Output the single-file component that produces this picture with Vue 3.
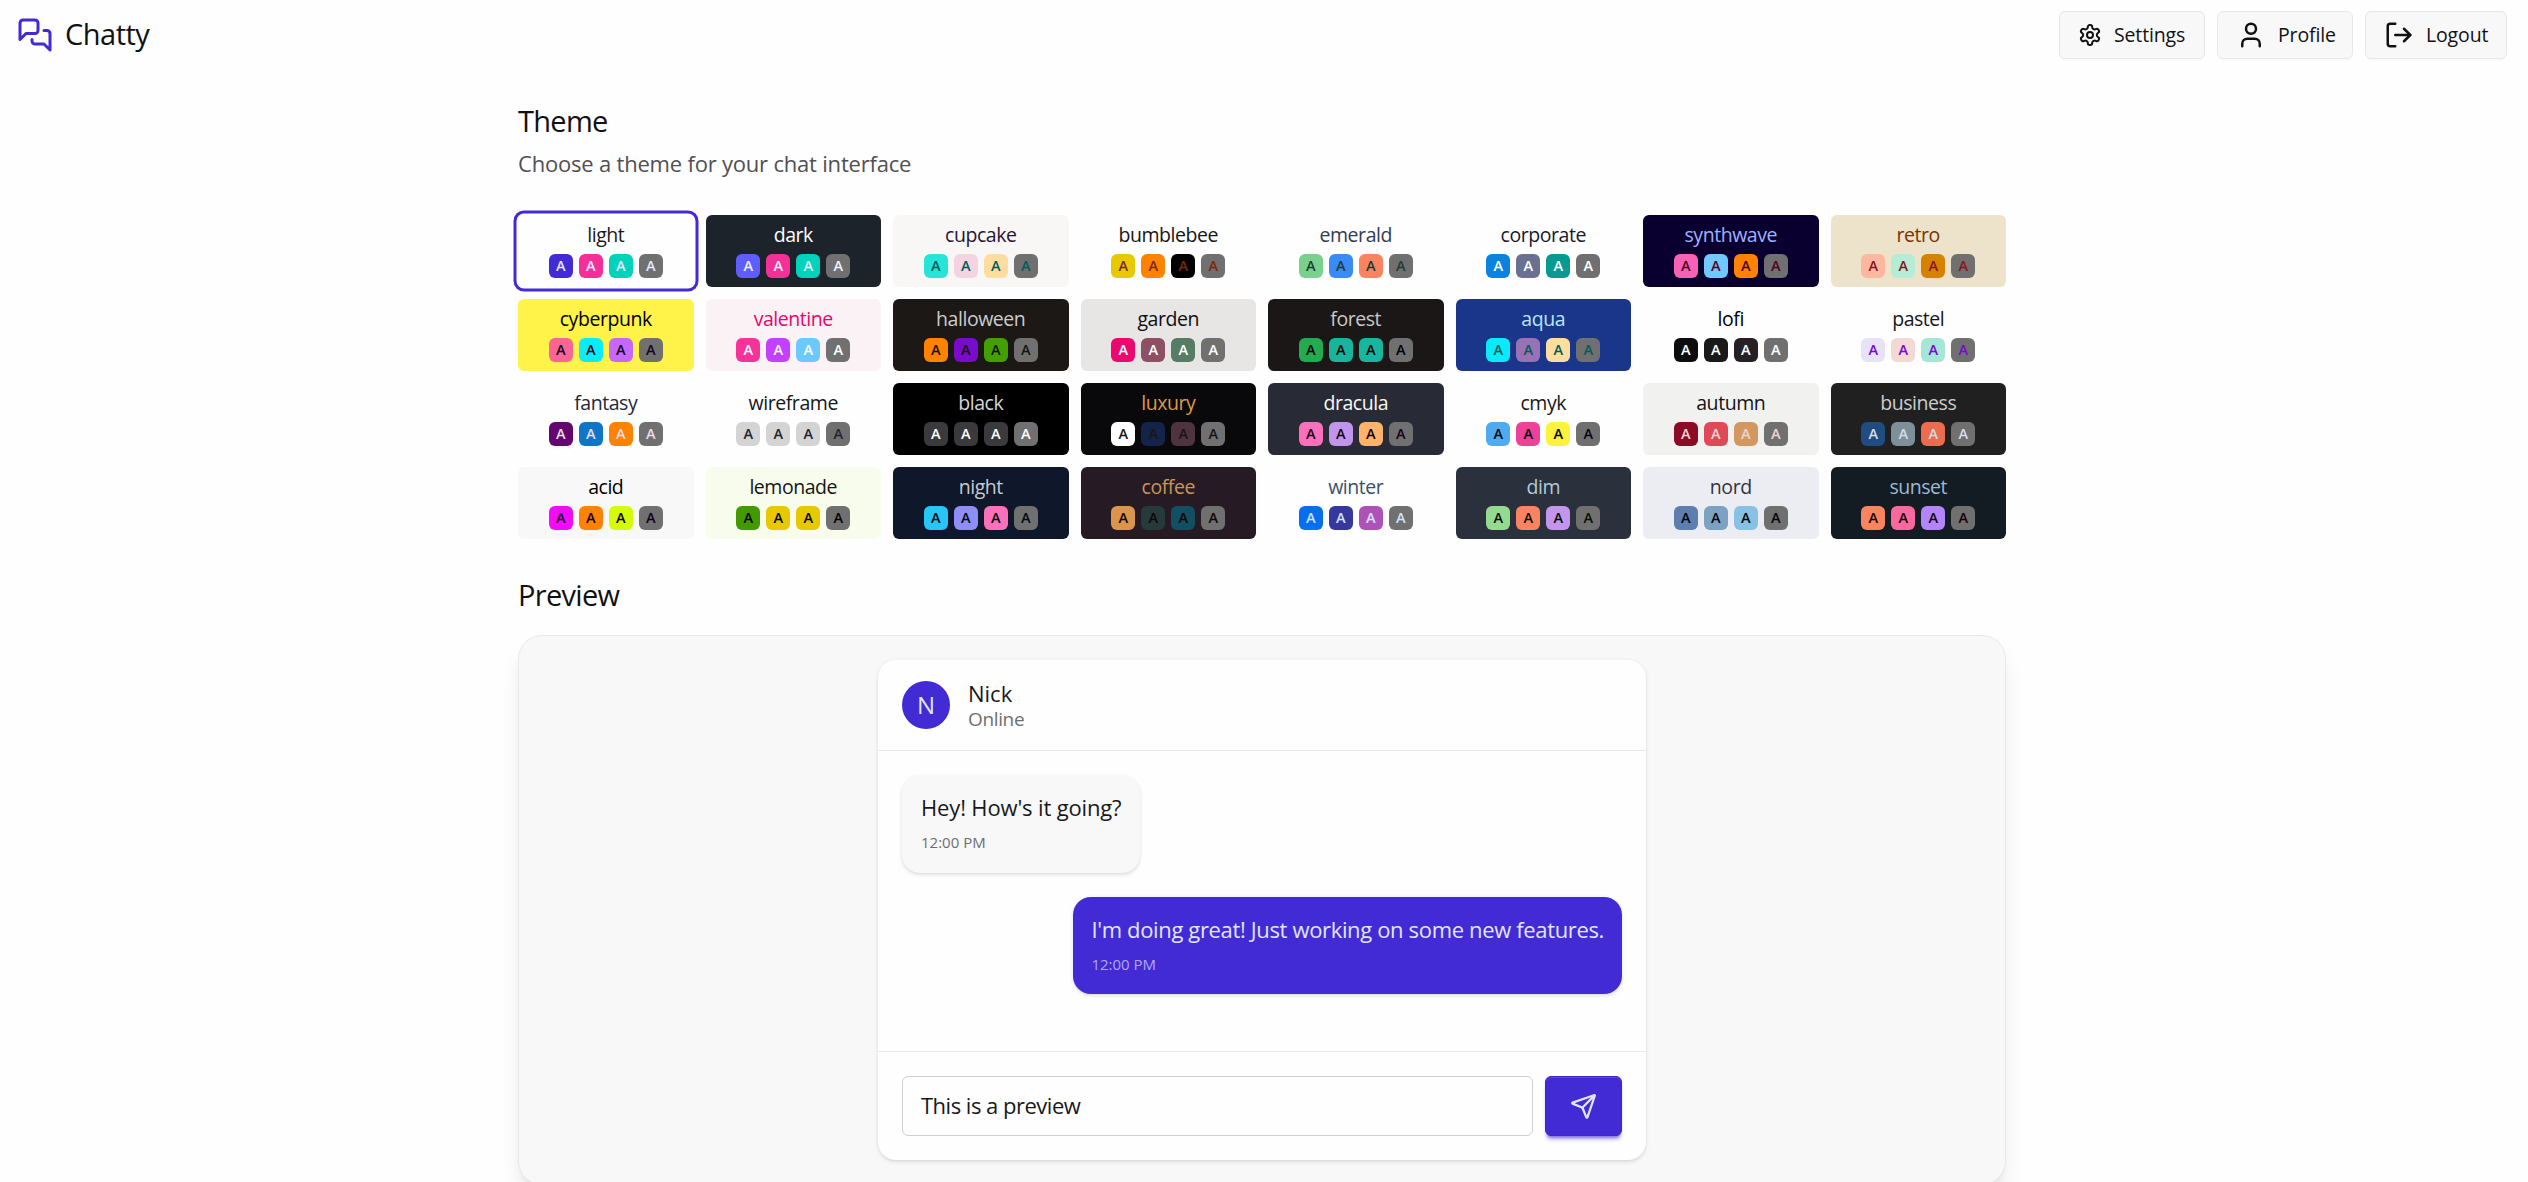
<script setup>
const raw = [
  ['light', '#fefefe', '#18181b', '#422ad5 #f43098 #00d3bb', '#e0e7ff'],
  ['dark', '#1d232a', '#ffffff', '#605dff #f43098 #00d3bb', '#edf1fe'],
  ['cupcake', '#f9f7f5', '#291334', '#25e5d8 #f3d4e0 #ffdca0', '#005d58'],
  ['bumblebee', '#fefefe', '#161616', '#e8c800 #ff8200 #000000', '#7a2a0a'],
  ['emerald', '#fefefe', '#333c4d', '#7ad18e #3a8af7 #fa8460', '#223d30'],
  ['corporate', '#fefefe', '#181a2a', '#0b82dd #6a7090 #079a92', '#ffffff'],
  ['synthwave', '#09002f', '#a1b1ff', '#f861b4 #71c8ff #ff8200', '#500323'],
  ['retro', '#ece3ca', '#793205', '#ffb8a0 #b4ecd6 #d68200', '#8b1320'],
  ['cyberpunk', '#fff248', '#000000', '#fa6496 #0aecf7 #c668ff', '#190711'],
  ['valentine', '#fbf2f6', '#e8056c', '#f63398 #c340ff #6bc9ff', '#ffffff'],
  ['halloween', '#1b1816', '#cdcdcd', '#ff8200 #7a0bcb #43a000', '#151611'],
  ['garden', '#e8e6e5', '#100f0f', '#ed0870 #8c4f64 #577c65', '#ffffff'],
  ['forest', '#1b1716', '#cac9c9', '#22ab50 #18b59c #18b59f', '#000000'],
  ['aqua', '#1a368b', '#b8e6fe', '#0aeaf7 #9b71b5 #ffdca0', '#005d58'],
  ['lofi', '#fefefe', '#000000', '#0d0d0d #1a1919 #262026', '#ffffff'],
  ['pastel', '#fefefe', '#161616', '#e8e2f9 #f3d8d3 #a5e6d8', '#7a09cc'],
  ['fantasy', '#fefefe', '#1f2937', '#63066d #0e75c7 #ff8200', '#e8dce9'],
  ['wireframe', '#fefefe', '#161616', '#d4d4d4 #d4d4d4 #d4d4d4', '#24242e'],
  ['black', '#000000', '#d6d6d6', '#3a3a3c #3a3a3c #3a3a3c', '#ffffff'],
  ['luxury', '#09090b', '#dc9a45', '#ffffff #14234a #4f3440', '#171618'],
  ['dracula', '#282a36', '#f8f8f2', '#fb70bb #c295ec #fdb36b', '#16040e'],
  ['cmyk', '#fefefe', '#161616', '#4faaf0 #ee4198 #fff23b', '#02080f'],
  ['autumn', '#f1f1f0', '#141414', '#8c0c25 #df4857 #d39860', '#efd3d4'],
  ['business', '#202020', '#cdcdcd', '#1f4d7f #7d909a #ec6c4f', '#d3dbe8'],
  ['acid', '#f8f8f8', '#000000', '#f50bfc #ff8200 #d4fb07', '#160016'],
  ['lemonade', '#f8fced', '#151614', '#439a00 #e8c800 #e8c800', '#010800'],
  ['night', '#0f172a', '#c9cbd0', '#28c5f7 #8e8ef5 #fb70bb', '#010d15'],
  ['coffee', '#261b25', '#c9955a', '#db954c #263a3b #134f63', '#110802'],
  ['winter', '#fefefe', '#3a5067', '#066eef #36399b #ae52b8', '#cde3ff'],
  ['dim', '#2a303c', '#b2ccd6', '#94da90 #fb8460 #c495ec', '#081108'],
  ['nord', '#ecedf3', '#2e3440', '#5d7eae #7ba2c3 #87c2e6', '#03060b'],
  ['sunset', '#121c22', '#9fb9d0', '#fb8460 #fb68a0 #b484fd', '#150603'],
]
const themes = raw.map(([name, bg, fg, sw, ink]) => ({
  name, bg, fg, ink, swatches: [...sw.split(' '), '#707070'],
}))
const active = 'light'
const messages = [
  { id: 1, text: "Hey! How's it going?", time: '12:00 PM', mine: false },
  { id: 2, text: "I'm doing great! Just working on some new features.", time: '12:00 PM', mine: true },
]
</script>

<template>
  <div class="page">
    <header class="topbar">
      <div class="brand">
        <svg class="icon" width="36" height="36" viewBox="0 0 24 24">
          <path d="M14 9a2 2 0 0 1-2 2H6l-4 4V4a2 2 0 0 1 2-2h8a2 2 0 0 1 2 2z" />
          <path d="M18 9h2a2 2 0 0 1 2 2v11l-4-4h-6a2 2 0 0 1-2-2v-1" />
        </svg>
        <h1>Chatty</h1>
      </div>
      <nav>
        <button class="nav-btn settings">
          <svg class="icon" width="24" height="24" viewBox="0 0 24 24">
            <path d="M12.22 2h-.44a2 2 0 0 0-2 2v.18a2 2 0 0 1-1 1.73l-.43.25a2 2 0 0 1-2 0l-.15-.08a2 2 0 0 0-2.73.73l-.22.38a2 2 0 0 0 .73 2.73l.15.1a2 2 0 0 1 1 1.72v.51a2 2 0 0 1-1 1.74l-.15.09a2 2 0 0 0-.73 2.73l.22.38a2 2 0 0 0 2.73.73l.15-.08a2 2 0 0 1 2 0l.43.25a2 2 0 0 1 1 1.73V20a2 2 0 0 0 2 2h.44a2 2 0 0 0 2-2v-.18a2 2 0 0 1 1-1.73l.43-.25a2 2 0 0 1 2 0l.15.08a2 2 0 0 0 2.73-.73l.22-.39a2 2 0 0 0-.73-2.73l-.15-.08a2 2 0 0 1-1-1.74v-.5a2 2 0 0 1 1-1.74l.15-.09a2 2 0 0 0 .73-2.73l-.22-.38a2 2 0 0 0-2.73-.73l-.15.08a2 2 0 0 1-2 0l-.43-.25a2 2 0 0 1-1-1.73V4a2 2 0 0 0-2-2z" />
            <circle cx="12" cy="12" r="3" />
          </svg>
          <span>Settings</span>
        </button>
        <button class="nav-btn profile">
          <svg class="icon" width="30" height="30" viewBox="0 0 24 24">
            <path d="M19 21v-2a4 4 0 0 0-4-4H9a4 4 0 0 0-4 4v2" />
            <circle cx="12" cy="7" r="4" />
          </svg>
          <span>Profile</span>
        </button>
        <button class="nav-btn logout">
          <svg class="icon" width="30" height="30" viewBox="0 0 24 24">
            <path d="M9 21H5a2 2 0 0 1-2-2V5a2 2 0 0 1 2-2h4" />
            <path d="m16 17 5-5-5-5" />
            <path d="M21 12H9" />
          </svg>
          <span>Logout</span>
        </button>
      </nav>
    </header>

    <main>
      <h2 class="title">Theme</h2>
      <p class="subtitle">Choose a theme for your chat interface</p>

      <div class="grid">
        <div
          v-for="t in themes"
          :key="t.name"
          class="theme"
          :class="{ active: t.name === active }"
          :style="{ background: t.bg, color: t.fg }"
        >
          <div class="name">{{ t.name }}</div>
          <div class="swatches">
            <span v-for="(c, i) in t.swatches" :key="i" :style="{ background: c, color: t.ink }">A</span>
          </div>
        </div>
      </div>

      <h2 class="title second">Preview</h2>

      <section class="preview">
        <div class="chat">
          <div class="chat-head">
            <div class="avatar">N</div>
            <div>
              <div class="who">Nick</div>
              <div class="status">Online</div>
            </div>
          </div>
          <div class="log">
            <div v-for="m in messages" :key="m.id" class="bubble" :class="{ mine: m.mine }">
              <p>{{ m.text }}</p>
              <time>{{ m.time }}</time>
            </div>
          </div>
          <div class="composer">
            <div class="field">This is a preview</div>
            <button class="send">
              <svg class="icon" width="27" height="27" viewBox="0 0 24 24">
                <path d="M14.536 21.686a.5.5 0 0 0 .937-.024l6.5-19a.496.496 0 0 0-.635-.635l-19 6.5a.5.5 0 0 0-.024.937l7.93 3.18a2 2 0 0 1 1.112 1.11z" />
                <path d="m21.854 2.147-10.94 10.939" />
              </svg>
            </button>
          </div>
        </div>
      </section>
    </main>
  </div>
</template>

<style>
html, body { background: #fefefe; }
body { overflow: hidden; }
</style>

<style scoped>
* { box-sizing: border-box; margin: 0; }
.page {
  width: 2524px;
  height: 1182px;
  overflow: hidden;
  font-family: "Open Sans", "Noto Sans", sans-serif;
  color: #18181b;
}
.icon {
  flex: none;
  fill: none;
  stroke: currentColor;
  stroke-width: 2;
  stroke-linecap: round;
  stroke-linejoin: round;
}
.topbar {
  height: 70px;
  padding: 0 17px;
  display: flex;
  align-items: center;
  justify-content: space-between;
}
.brand { display: flex; align-items: center; gap: 12px; }
.brand .icon { color: #422ad5; }
h1 { font-size: 29px; line-height: 40px; font-weight: 500; letter-spacing: -0.5px; padding-bottom: 2px; color: #111114; }
nav { display: flex; gap: 12px; }
.nav-btn {
  height: 48px;
  border: 1px solid #e8e8e8;
  border-radius: 6px;
  background: #f8f8f8;
  box-shadow: 0 3px 3px -2px #0000000a;
  color: #111114;
  display: flex;
  align-items: center;
  gap: 12px;
  padding: 0 0 0 18px;
  font: 500 19.5px/28px "Open Sans", "Noto Sans", sans-serif;
  letter-spacing: -0.15px;
  white-space: nowrap;
}
.settings { width: 146px; }
.profile { width: 136px; }
.logout { width: 142px; }

main { width: 1488px; margin: 0 auto; padding-top: 31px; }
.title { font-size: 29px; line-height: 40px; font-weight: 500; letter-spacing: -0.7px; color: #111114; }
.subtitle { margin-top: 7px; font-size: 22px; line-height: 30px; letter-spacing: -0.2px; color: #505052; }
.grid {
  margin-top: 37px;
  display: grid;
  grid-template-columns: repeat(8, 1fr);
  gap: 12px;
}
.theme {
  height: 72px;
  border-radius: 6px;
  padding-top: 6px;
  text-align: center;
}
.theme.active { box-shadow: 0 0 0 1.5px #fefefe, 0 0 0 4.5px #422ad5; }
.name { font-size: 19.5px; line-height: 28px; font-weight: 500; letter-spacing: -0.45px; }
.swatches { margin-top: 5px; display: flex; justify-content: center; gap: 6px; }
.swatches span {
  width: 24px;
  height: 24px;
  border-radius: 6px;
  font-size: 14.5px;
  line-height: 24px;
  font-weight: 600;
}
.second { margin-top: 36px; }
.preview {
  margin-top: 20px;
  height: 550px;
  border: 1px solid #e9e9e9;
  border-radius: 24px;
  background: #f8f8f8;
  box-shadow: 0 15px 22px -4px #0000001a, 0 6px 9px -6px #0000001a;
  padding-top: 24px;
}
.chat {
  width: 768px;
  height: 500px;
  margin: 0 auto;
  background: #fefefe;
  border-radius: 18px;
  box-shadow: 0 1.5px 4.5px #0000001a, 0 1.5px 3px -1.5px #0000001a;
  display: flex;
  flex-direction: column;
}
.chat-head {
  height: 91px;
  border-bottom: 1px solid #e9e9e9;
  padding: 0 24px;
  display: flex;
  align-items: center;
  gap: 18px;
}
.avatar {
  width: 48px;
  height: 48px;
  border-radius: 50%;
  background: #422ad5;
  color: #e0e7ff;
  font-size: 24px;
  line-height: 48px;
  text-align: center;
}
.who { padding-top: 2px; font-size: 22px; line-height: 26px; }
.status { font-size: 19px; line-height: 26px; letter-spacing: -0.35px; color: #6e6e70; }
.log {
  flex: 1;
  padding: 25px 24px 0;
  display: flex;
  flex-direction: column;
  align-items: flex-start;
  gap: 24px;
}
.bubble {
  height: 97px;
  padding: 14px 19px 0;
  border-radius: 18px;
  background: #f8f8f8;
  box-shadow: 0 1.5px 4.5px #0000001a, 0 1.5px 3px -1.5px #0000001a;
  white-space: nowrap;
}
.bubble p { font-size: 22px; line-height: 34px; letter-spacing: -0.15px; }
.bubble time { display: block; margin-top: 8px; font-size: 15px; line-height: 20px; color: #6e6e70; }
.bubble.mine { align-self: flex-end; padding: 15px 18px 0; background: #422ad5; color: #e0e7ff; }
.bubble.mine p { letter-spacing: -0.35px; }
.bubble.mine time { color: #b1a9ec; }
.composer {
  height: 109px;
  border-top: 1px solid #e9e9e9;
  padding: 24px 24px 0;
  display: flex;
  gap: 12px;
}
.field {
  flex: 1;
  height: 60px;
  border: 1px solid #cfcfcf;
  border-radius: 6px;
  padding: 0 18px;
  font-size: 22px;
  line-height: 57px;
  letter-spacing: -0.5px;
}
.send {
  width: 77px;
  height: 60px;
  border: 1px solid #3c26c6;
  border-radius: 6px;
  background: #422ad5;
  color: #e0e7ff;
  box-shadow: inset 0 1px 0 #5a46da, 0 4px 3px -2px #422ad580, 0 5px 5px -2px #422ad54d;
  display: flex;
  align-items: center;
  justify-content: center;
}
</style>
